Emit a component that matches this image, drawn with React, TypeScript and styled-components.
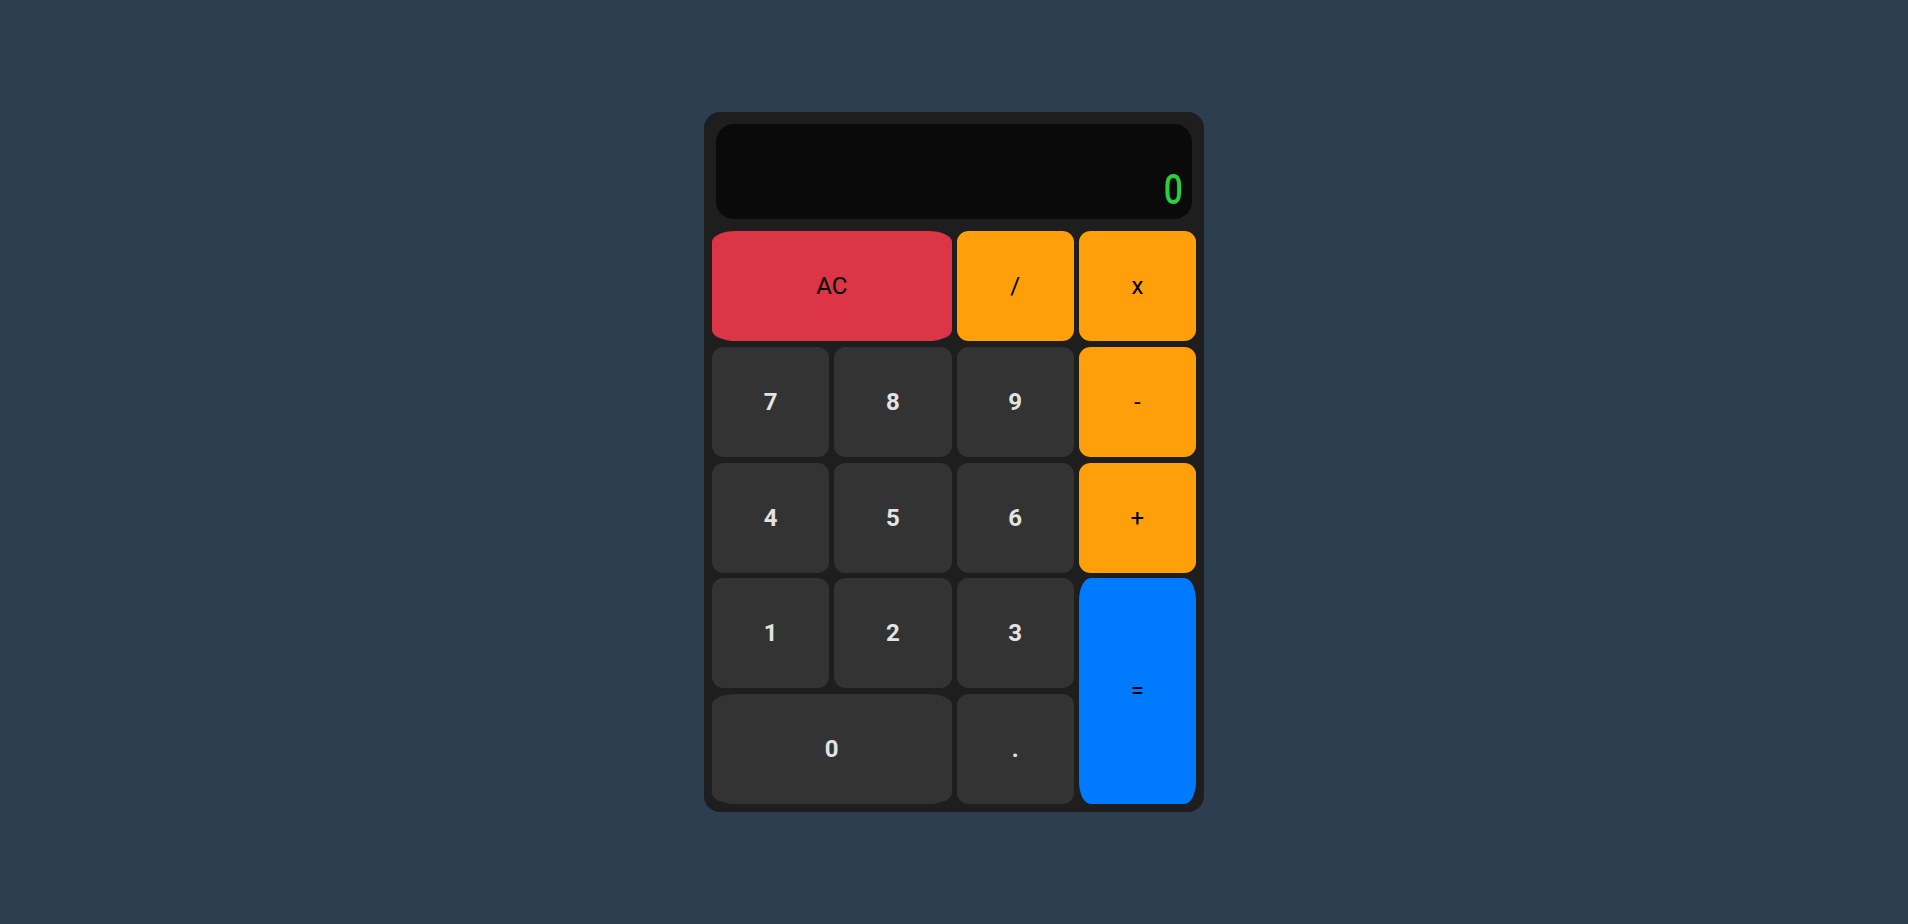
import React from "react";
import styled, { createGlobalStyle } from "styled-components";

const GlobalStyle = createGlobalStyle`
  html, body {
    margin: 0;
    padding: 0;
    background: #2c3e50;
    font-family: Roboto, "Liberation Sans", Arial, sans-serif;
    overflow: hidden;
  }
  * { box-sizing: border-box; }
`;

const Page = styled.div`
  height: 100vh;
  display: flex;
  align-items: center;
  justify-content: center;
`;

const Calculator = styled.div`
  width: 500px;
  padding: 8px;
  background: #1e1e1e;
  border-radius: 16px;
  display: flex;
  flex-direction: column;
`;

const Display = styled.div`
  height: 95px;
  margin: 4px 4px 12px;
  background: #0a0a0a;
  border-radius: 18px;
  display: flex;
  align-items: flex-end;
  justify-content: flex-end;
  padding: 0 9px 8px;
`;

const Readout = styled.span`
  font-family: Roboto, "DejaVu Sans", sans-serif;
  font-weight: 500;
  font-size: 42px;
  line-height: 1;
  color: #2ecc40;
  transform: scaleX(0.8);
  transform-origin: right bottom;
`;

const Keys = styled.div`
  display: grid;
  grid-template-columns: repeat(4, 1fr);
  grid-template-rows: repeat(5, 110px);
  column-gap: 5px;
  row-gap: 5.75px;
`;

type Variant = "num" | "op" | "clear" | "equals";

const bg: Record<Variant, string> = {
  num: "#333333",
  op: "#ff9f0a",
  clear: "#dc3545",
  equals: "#007bff",
};

const Key = styled.button<{ $variant: Variant; $wide?: boolean; $tall?: boolean }>`
  border: none;
  margin: 0;
  padding: 0;
  border-radius: 10%;
  background: ${(p) => bg[p.$variant]};
  color: ${(p) => (p.$variant === "num" ? "#e3e3e3" : "#000")};
  font-family: Roboto, "Liberation Sans", Arial, sans-serif;
  font-size: 24px;
  font-weight: ${(p) => (p.$variant === "num" ? 700 : 400)};
  display: flex;
  align-items: center;
  justify-content: center;
  cursor: pointer;
  grid-column: ${(p) => (p.$wide ? "span 2" : "auto")};
  grid-row: ${(p) => (p.$tall ? "span 2" : "auto")};
`;

export default function App() {
  return (
    <>
      <GlobalStyle />
      <Page>
        <Calculator>
          <Display>
            <Readout>0</Readout>
          </Display>
          <Keys>
            <Key $variant="clear" $wide>AC</Key>
            <Key $variant="op">/</Key>
            <Key $variant="op">x</Key>
            <Key $variant="num">7</Key>
            <Key $variant="num">8</Key>
            <Key $variant="num">9</Key>
            <Key $variant="op">-</Key>
            <Key $variant="num">4</Key>
            <Key $variant="num">5</Key>
            <Key $variant="num">6</Key>
            <Key $variant="op">+</Key>
            <Key $variant="num">1</Key>
            <Key $variant="num">2</Key>
            <Key $variant="num">3</Key>
            <Key $variant="equals" $tall>=</Key>
            <Key $variant="num" $wide>0</Key>
            <Key $variant="num">.</Key>
          </Keys>
        </Calculator>
      </Page>
    </>
  );
}
